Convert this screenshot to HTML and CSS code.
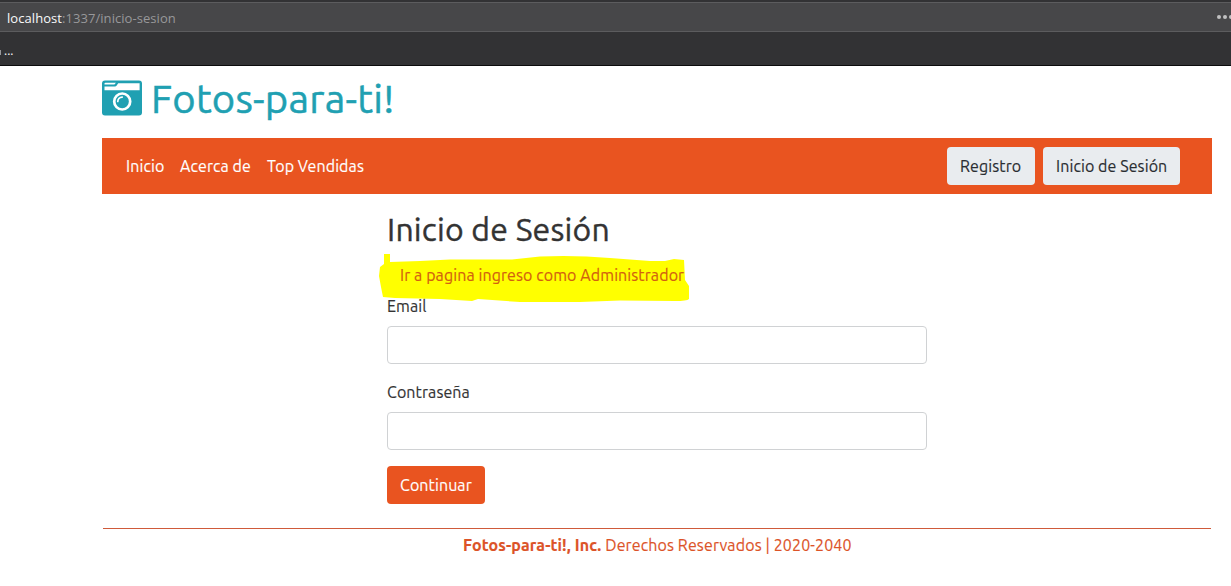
FILE: index.html
```html
<!DOCTYPE html>
<html lang="es">
<head>
<meta charset="utf-8">
<title>Fotos-para-ti!</title>
<link rel="stylesheet" href="styles.css">
</head>
<body>
<div class="browser">
  <div class="address"><span class="url"><b>localhost</b>:1337/inicio-sesion</span>
    <svg class="more" width="14" height="6" viewBox="0 0 14 6"><circle cx="2" cy="3" r="2"/><circle cx="8" cy="3" r="2"/><circle cx="14" cy="3" r="2"/></svg>
  </div>
  <div class="bookmarks"><i></i><span>...</span></div>
</div>
<div class="container">
  <h1 class="brand">
    <svg class="camera" width="40" height="36" viewBox="0 0 40 36">
      <path fill="#20a0b2" fill-rule="evenodd" d="M3 .5H37Q40 .5 40 3.500V32.500Q40 35.500 37 35.500H3Q0 35.500 0 32.500V3.500Q0 .5 3 .5ZM2.500 6.500V10.300H37.600V3.200H16.200L14.500 5.700Q14 6.500 13 6.500ZM3.400 2.700Q2.500 2.700 2.500 3.500V4.500H12.400L13.900 2.700Z"/>
      <circle cx="20.200" cy="21.500" r="8" fill="#20a0b2" stroke="#fff" stroke-width="2.700"/>
      <path d="M15.800 21.500a4.400 4.400 0 0 1 4.400-4.400" fill="none" stroke="#fff" stroke-width="1.700" stroke-linecap="round"/>
    </svg><span>Fotos-para-ti!</span>
  </h1>
  <nav class="navbar">
    <a class="n1">Inicio</a><a class="n2">Acerca de</a><a class="n3">Top Vendidas</a>
    <div class="actions"><button class="btn light reg"><span>Registro</span></button><button class="btn light login"><span>Inicio de Sesión</span></button></div>
  </nav>
  <form class="form">
    <h2><span>Inicio de Sesión</span></h2>
    <div class="admin">
      <svg class="marker" width="314" height="52" viewBox="378 252 314 52"><path fill="#ff0" d="M384 254H390V262L420 261L450 259.500L512 259.500L540 256.500Q575 255 610 258L650 261L665 261L674 259L684 260L685 280L689 286V299Q687 301 675 301L620 300.500L580 302H520L478 299L472 301L440 299L395 298L383 297L381 287L379 276L380 267L384 264Z"/></svg>
      <a><span>Ir a pagina ingreso como Administrador</span></a>
    </div>
    <label for="email">Email</label>
    <input id="email" type="email">
    <label for="pass">Contraseña</label>
    <input id="pass" type="password">
    <button class="btn primary" type="button"><span>Continuar</span></button>
  </form>
  <footer><b>Fotos-para-ti!, Inc.</b> <span class="rights">Derechos Reservados | 2020-2040</span></footer>
</div>
</body>
</html>
```
FILE: styles.css
```css
*{box-sizing:border-box}
body{margin:0;background:#fff;color:#333;font:16px/24px Ubuntu,"Noto Sans",sans-serif;letter-spacing:.09px;-webkit-text-stroke:.15px;overflow:hidden}
.browser{height:66px;background:#323234;border-bottom:1px solid #0c0c0d;padding-top:2px;letter-spacing:0;-webkit-text-stroke:0}
.address{height:30px;background:#474749;border-top:1px solid #5c5c5e;border-bottom:1px solid #5c5c5e;padding-left:7px;display:flex;align-items:center;justify-content:space-between;color:#98989a;font:13px/28px "Open Sans",sans-serif;letter-spacing:.06px}
.url{padding-top:1px}
.url b{font-weight:400;color:#f9f9fa}
.more{fill:#c0c0c1}
.bookmarks{height:33px;display:flex;align-items:center;color:#f9f9fa;font:12px/16px "Open Sans",sans-serif;padding-top:4px}
.bookmarks i{width:1px;height:5px;background:#99999b;margin-right:3px;margin-top:3px}
.container{width:1110px;margin-left:102px}
.brand{margin:0;height:72px;padding-top:9px;display:flex;align-items:flex-start;color:#20a0b2;font-size:40px;line-height:48px;font-weight:400;letter-spacing:.25px;-webkit-text-stroke:.5px}
.camera{margin:5px 9px 0 0}
.navbar{height:56px;background:#e95420;display:flex;align-items:center;gap:16px;padding:0 32px 0 24px;color:#fff}
.n1{width:38px}
.n2{width:71px}
.n3{width:100px}
.navbar a,.btn,.brand span,h2 span,.admin a{white-space:nowrap}
.actions{margin-left:auto;display:flex;gap:8px}
.btn{height:38px;border:0;border-radius:4px;padding:0 13px;font:inherit;letter-spacing:inherit;text-align:left;display:block}
.light{background:#e9ecef;color:#292d31}
.reg{width:88px}
.login{width:137px}
.primary{width:98px;background:#e95420;color:#fff;margin-top:16px}
.form{width:540px;margin-left:285px;padding-top:16px}
h2{margin:0;font-size:32px;line-height:38px;font-weight:400;letter-spacing:.2px;-webkit-text-stroke:.4px}
.admin{position:relative;height:46px;padding:15px 0 0 13px;color:#d26010}
.marker{position:absolute;left:-9px;top:4px}
.admin a{position:relative}
label{display:block;height:32px}
input+label{margin-top:16px}
input{display:block;width:540px;height:38px;border:1px solid #d0d2d4;border-radius:4px;background:#fff}
footer{margin:24px 1px 0;border-top:1px solid #cf5a3a;height:40px;padding:4px 0 0 360px;color:#dc5328;white-space:nowrap;letter-spacing:.12px}
```
